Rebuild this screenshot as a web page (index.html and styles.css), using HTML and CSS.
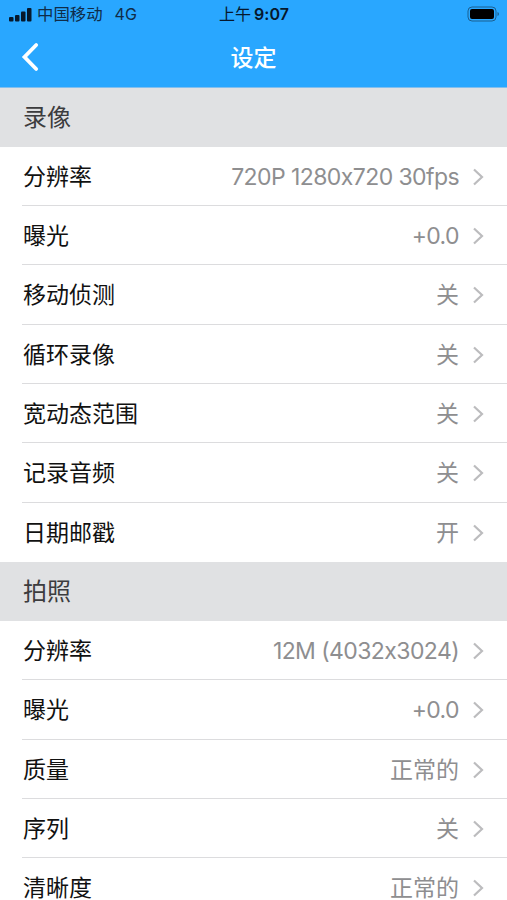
FILE: index.html
```html
<!DOCTYPE html>
<html lang="zh-CN">
<head>
<meta charset="utf-8">
<title>设定</title>
<link rel="stylesheet" href="styles.css">
</head>
<body>
<header class="top">
  <div class="status">
    <div class="carrier">
      <svg class="signal" width="24" height="14" viewBox="0 0 24 14" fill="#06182c"><rect x="0" y="9" width="4.500" height="4.500" rx="1"/><rect x="6" y="7" width="4.500" height="6.500" rx="1"/><rect x="12" y="3.500" width="4.500" height="10" rx="1"/><rect x="18" y="0" width="4.500" height="13.500" rx="1"/></svg>
      <span class="name">中国移动</span><span class="net">4G</span>
    </div>
    <div class="time"><span class="ampm">上午</span><span class="clock">9:07</span></div>
    <svg class="battery" width="33" height="16" viewBox="0 0 33 16"><rect x="1" y="1" width="28" height="14" rx="4" fill="none" stroke="#102436" stroke-opacity=".55"/><rect x="3" y="3" width="24" height="10" rx="2" fill="#000"/><path d="M30.500 6q1.500 .6 1.500 2t-1.500 2z" fill="#102436" fill-opacity=".55"/></svg>
  </div>
  <nav class="nav">
    <svg class="back" width="20" height="32" viewBox="0 0 20 32"><path d="M15.200 4L3.500 16l11.700 12" fill="none" stroke="#fff" stroke-width="3.800" stroke-linecap="round"/></svg>
    <h1 class="title">设定</h1>
  </nav>
</header>
<main id="settings"></main>
<script src="app.js"></script>
</body>
</html>
```
FILE: styles.css
```css
* { box-sizing: border-box; }
body { margin: 0; height: 900px; overflow: hidden; background: #fff; font-family: Inter, "Noto Sans CJK SC", sans-serif; font-feature-settings: "calt" 0; }
.top { height: 88px; background: #29a7ff; border-bottom: 1px solid #83bfee; }
.status { height: 29px; padding: 0 7px 0 9px; display: grid; grid-template-columns: 1fr auto 1fr; align-items: center; color: #102c48; }
.carrier { display: flex; align-items: center; font-size: 16.400px; line-height: 29px; }
.signal { margin-right: 4px; }
.net { margin-left: 12px; font-size: 16px; }
.time { display: flex; align-items: center; font-size: 16px; line-height: 29px; color: #06182c; margin-right: 1px; }
.clock { margin-left: 3px; font-weight: 600; }
.battery { justify-self: end; margin-top: -1px; }
.nav { height: 58px; display: grid; grid-template-columns: 60px 1fr 60px; align-items: center; }
.back { margin-left: 21px; margin-top: -2px; }
.title { margin: 0; text-align: center; color: #fff; font-size: 23px; font-weight: 500; line-height: 58px; }
.section { margin: 0; height: 58.800px; padding-left: 23px; background: #e0e1e3; color: #3c3c3e; font-size: 24px; font-weight: 400; line-height: 60px; }
.list { margin: 0; padding: 0 0 0 22px; list-style: none; }
.row { height: 59.330px; display: flex; align-items: center; padding: 1.700px 23px 0 1px; border-bottom: 1px solid #dcdcde; font-size: 23px; color: #111; line-height: 58px; }
.row:last-child { border-bottom-color: transparent; }
.value { margin-left: auto; color: #8e8e90; }
.arrow { margin-left: 13px; }
.latin { letter-spacing: -.58px; margin-right: -1px; }
.latin + .arrow { margin-left: 14px; }
```
FILE: app.js
```js
const groups = [
  ["录像", [["分辨率", "720P 1280x720 30fps"], ["曝光", "+0.0"], ["移动侦测", "关"], ["循环录像", "关"], ["宽动态范围", "关"], ["记录音频", "关"], ["日期邮戳", "开"]]],
  ["拍照", [["分辨率", "12M (4032x3024)"], ["曝光", "+0.0"], ["质量", "正常的"], ["序列", "关"], ["清晰度", "正常的"]]]
];
const arrow = '<svg class="arrow" width="12" height="18" viewBox="0 0 12 18"><path d="M2 1.500l8 7.500L2 16.500" fill="none" stroke="#bcbcbe" stroke-width="2.200"/></svg>';
document.getElementById("settings").innerHTML = groups.map(([title, rows]) =>
  `<section><h2 class="section">${title}</h2><ul class="list">${rows.map(([label, value]) =>
    `<li class="row"><span class="label">${label}</span><span class="value${/\d/.test(value) ? " latin" : ""}">${value}</span>${arrow}</li>`).join("")}</ul></section>`).join("");
```
